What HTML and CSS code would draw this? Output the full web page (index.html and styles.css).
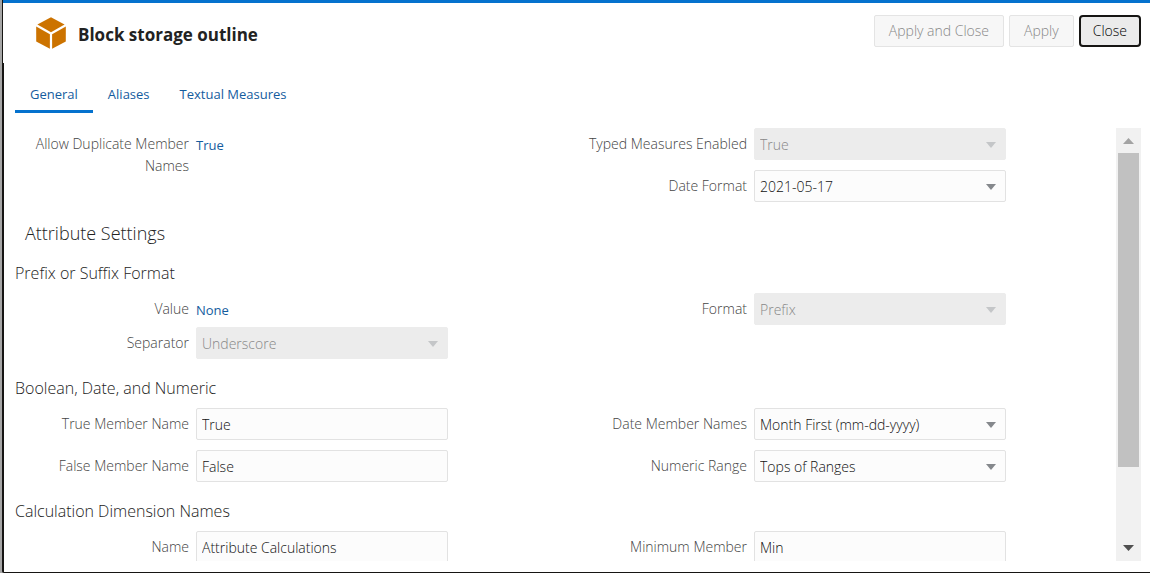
FILE: index.html
```html
<!DOCTYPE html>
<html lang="en">
<head>
<meta charset="utf-8">
<title>Block storage outline</title>
<link rel="stylesheet" href="styles.css">
</head>
<body>
<main class="dialog">
  <header class="header">
    <svg class="logo" viewBox="0 0 30 32" aria-hidden="true">
      <path d="M15 0.3 28.6 7.5 15 15.2 1.4 7.5Z"/>
      <path d="M0.2 9.6 13.9 17.2V31.8L0.2 24.4Z"/>
      <path d="M29.8 9.6 16.1 17.2V31.8L29.8 24.4Z"/>
    </svg>
    <h1 class="title">Block storage outline</h1>
    <div class="actions">
      <button class="button" type="button" disabled>Apply and Close</button>
      <button class="button" type="button" disabled>Apply</button>
      <button class="button button-focus" type="button">Close</button>
    </div>
  </header>
  <nav class="tabs">
    <a class="tab tab-active" href="#general">General</a>
    <a class="tab" href="#aliases">Aliases</a>
    <a class="tab" href="#measures">Textual Measures</a>
  </nav>
  <div class="body">
    <form class="form" id="general">
      <section class="columns columns-top">
        <div>
          <div class="row row-link"><span class="label">Allow Duplicate Member Names</span><a class="value" href="#duplicate">True</a></div>
        </div>
        <div>
          <div class="row"><label class="label" for="typed">Typed Measures Enabled</label><span class="picker"><select class="field" id="typed" disabled><option>True</option></select></span></div>
          <div class="row"><label class="label" for="date-format">Date Format</label><span class="picker"><select class="field" id="date-format"><option>2021-05-17</option></select></span></div>
        </div>
      </section>
      <h2 class="heading">Attribute Settings</h2>
      <h3 class="subheading">Prefix or Suffix Format</h3>
      <section class="columns">
        <div>
          <div class="row row-link"><span class="label">Value</span><a class="value" href="#value">None</a></div>
          <div class="row"><label class="label" for="separator">Separator</label><span class="picker"><select class="field" id="separator" disabled><option>Underscore</option></select></span></div>
        </div>
        <div>
          <div class="row"><label class="label" for="format">Format</label><span class="picker"><select class="field" id="format" disabled><option>Prefix</option></select></span></div>
        </div>
      </section>
      <h3 class="subheading">Boolean, Date, and Numeric</h3>
      <section class="columns">
        <div>
          <div class="row"><label class="label" for="true-name">True Member Name</label><input class="field" id="true-name" type="text" value="True"></div>
          <div class="row"><label class="label" for="false-name">False Member Name</label><input class="field" id="false-name" type="text" value="False"></div>
        </div>
        <div>
          <div class="row"><label class="label" for="date-names">Date Member Names</label><span class="picker"><select class="field" id="date-names"><option>Month First (mm-dd-yyyy)</option></select></span></div>
          <div class="row"><label class="label" for="range">Numeric Range</label><span class="picker"><select class="field" id="range"><option>Tops of Ranges</option></select></span></div>
        </div>
      </section>
      <h3 class="subheading">Calculation Dimension Names</h3>
      <section class="columns">
        <div>
          <div class="row"><label class="label" for="name">Name</label><input class="field" id="name" type="text" value="Attribute Calculations"></div>
        </div>
        <div>
          <div class="row"><label class="label" for="minimum">Minimum Member</label><input class="field" id="minimum" type="text" value="Min"></div>
        </div>
      </section>
    </form>
    <div class="scrollbar" aria-hidden="true">
      <svg class="scroll-arrow scroll-up" viewBox="0 0 25 25"><path d="M7 16 12.5 10 18 16Z"/></svg>
      <div class="track"><div class="thumb"></div></div>
      <svg class="scroll-arrow" viewBox="0 0 25 25"><path d="M7 9H18L12.5 15Z"/></svg>
    </div>
  </div>
</main>
</body>
</html>
```
FILE: styles.css
```css
* {
  box-sizing: border-box;
}

body {
  margin: 0;
  background: #a6a6a6;
  font-family: "Open Sans", "Noto Sans", sans-serif;
  font-size: 14px;
  color: #222;
}

.dialog {
  display: flex;
  flex-direction: column;
  height: 100vh;
  margin-left: 2px;
  padding: 0 9px 11px 11px;
  border-left: 2px solid #161513;
  border-bottom: 1px solid #161513;
  border-bottom-left-radius: 2px;
  background: #fff;
}

.header {
  display: flex;
  align-items: flex-start;
  height: 63px;
  margin: 0 -9px 0 -12px;
  padding: 12px 9px 0 33px;
  border-top: 3px solid #0572ce;
  background: #fff;
}

.logo {
  width: 30px;
  height: 32px;
  margin-top: 2px;
  fill: #cc7300;
}

.title {
  flex: 1;
  margin: 8px 0 0 12px;
  font-size: 17px;
  font-weight: 700;
  line-height: 24px;
  color: #222;
}

.actions {
  display: flex;
  gap: 5px;
}

.button {
  height: 32px;
  padding: 0 14px 1px;
  border: 1px solid #e4e4e4;
  border-radius: 2px;
  background: #f7f7f7;
  font: inherit;
  font-weight: 300;
  color: #888;
}

.button-focus {
  padding: 0 12px 1px;
  border: 2px solid #161513;
  border-radius: 4px;
  background: #ebebeb;
  color: #000;
}

.tabs {
  display: flex;
  margin-top: 12px;
}

.tab {
  padding: 8px 15px 5px;
  border-bottom: 3px solid transparent;
  font-size: 13px;
  line-height: 22px;
  color: #145c9e;
  text-decoration: none;
}

.tab-active {
  border-color: #0572ce;
}

.body {
  display: flex;
  flex: 1;
  min-height: 0;
  margin-top: 15px;
}

.form {
  flex: 1;
  overflow-y: auto;
  scrollbar-width: none;
}

.columns {
  display: grid;
  grid-template-columns: 1fr 1fr;
  gap: 15px;
}

.row {
  display: grid;
  grid-template-columns: 174px 252px;
  column-gap: 7px;
  margin-bottom: 10px;
}

.row-link {
  margin-bottom: 6px;
}

.label {
  padding: 5px 0 0 8px;
  font-weight: 300;
  line-height: 22px;
  text-align: right;
  color: #444;
}

.value {
  padding-top: 6px;
  font-size: 13px;
  line-height: 22px;
  color: #145c9e;
  text-decoration: none;
}

.picker {
  position: relative;
}

.picker::after {
  content: "";
  position: absolute;
  top: 14px;
  right: 10px;
  border: 5px solid transparent;
  border-top: 6px solid #85888c;
  border-bottom: 0;
  pointer-events: none;
}

.picker:has(:disabled)::after {
  border-top-color: #c4c6c8;
}

.field {
  width: 100%;
  height: 32px;
  padding: 0 5px;
  border: 1px solid #e2e2e2;
  border-radius: 2px;
  background: #fcfcfc;
  appearance: none;
  font: inherit;
  font-weight: 300;
  color: #111;
}

.field:disabled {
  border-color: #ececec;
  background: #ececec;
  color: #888;
  opacity: 1;
}

.heading {
  margin: 6px 0 0 10px;
  font-size: 18px;
  font-weight: 300;
  line-height: 30px;
}

.subheading {
  margin: 0;
  padding: 15px 0 10px;
  font-size: 16px;
  font-weight: 300;
  line-height: 20px;
}

.columns + .subheading {
  padding: 9px 0 10px;
}

.scrollbar {
  display: flex;
  flex-direction: column;
  width: 25px;
  background: #f1f1f1;
}

.scroll-arrow {
  width: 25px;
  height: 25px;
  fill: #505050;
}

.scroll-up {
  fill: #a3a3a3;
}

.track {
  flex: 1;
  padding: 0 2px;
}

.thumb {
  height: 82%;
  background: #c1c1c1;
}
```
